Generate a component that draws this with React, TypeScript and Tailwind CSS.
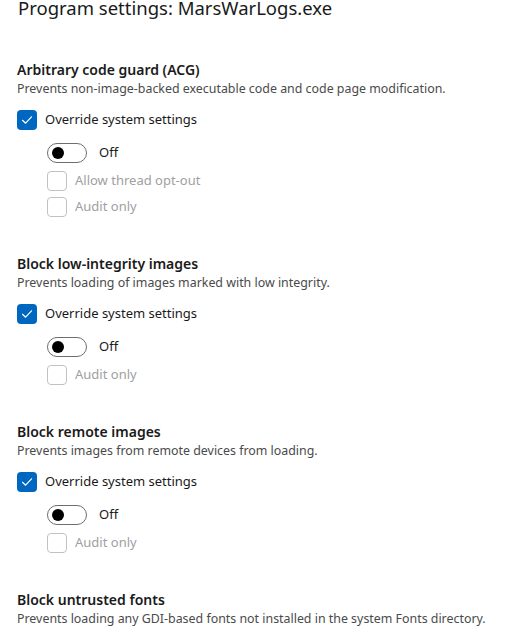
import React from "react";

function CheckedBox() {
  return (
    <div className="w-[20px] h-[20px] rounded-[4px] bg-[#0067c0] flex items-center justify-center shrink-0">
      <svg width="12" height="12" viewBox="0 0 12 12" fill="none">
        <path d="M1.5 6.3 L4.6 9.2 L10.5 2.8" stroke="white" strokeWidth="1.2" strokeLinecap="round" strokeLinejoin="round" />
      </svg>
    </div>
  );
}

function EmptyBox() {
  return <div className="w-[20px] h-[20px] rounded-[4px] border border-[#c2c2c2] bg-white shrink-0" />;
}

function Toggle() {
  return (
    <div className="w-[40px] h-[20px] rounded-full border border-[#6e6e6e] bg-white flex items-center pl-[4px] shrink-0">
      <div className="w-[12px] h-[12px] rounded-full bg-black" />
    </div>
  );
}

function Section({ title, desc, options, first }: { title: string; desc: string; options: string[]; first?: boolean }) {
  return (
    <div className={first ? "mt-[44px]" : "mt-[37px]"}>
      <div className="text-[14px] leading-[20px] font-semibold text-[#1a1a1a]">{title}</div>
      <div className="text-[12.4px] leading-[18px] text-[#4a4a4a]">{desc}</div>
      <div className="flex items-center gap-[8px] h-[20px] mt-[12px]">
        <CheckedBox />
        <span className="text-[13px] text-[#1a1a1a]">Override system settings</span>
      </div>
      <div className="pl-[30px] flex flex-col">
        <div className="flex items-center gap-[12px] h-[20px] mt-[13px]">
          <Toggle />
          <span className="text-[13px] text-[#1a1a1a]">Off</span>
        </div>
        {options.map((o, i) => (
          <div key={o} className={"flex items-center gap-[8px] h-[20px] " + (i === 0 ? "mt-[8px]" : "mt-[6px]")}>
            <EmptyBox />
            <span className="text-[13px] text-[#a0a0a0]">{o}</span>
          </div>
        ))}
      </div>
    </div>
  );
}

export default function App() {
  return (
    <div className="w-[526px] h-[633px] overflow-hidden bg-white font-['Noto_Sans',sans-serif] pl-[17px]">
      <div className="text-[18.5px] leading-[16px] text-[#1a1a1a] pl-[1px]">Program settings: MarsWarLogs.exe</div>
      <Section
        first
        title="Arbitrary code guard (ACG)"
        desc="Prevents non-image-backed executable code and code page modification."
        options={["Allow thread opt-out", "Audit only"]}
      />
      <Section
        title="Block low-integrity images"
        desc="Prevents loading of images marked with low integrity."
        options={["Audit only"]}
      />
      <Section
        title="Block remote images"
        desc="Prevents images from remote devices from loading."
        options={["Audit only"]}
      />
      <div className="mt-[37px]">
        <div className="text-[14px] leading-[20px] font-semibold text-[#1a1a1a]">Block untrusted fonts</div>
        <div className="text-[12.4px] leading-[18px] text-[#4a4a4a]">Prevents loading any GDI-based fonts not installed in the system Fonts directory.</div>
      </div>
    </div>
  );
}
